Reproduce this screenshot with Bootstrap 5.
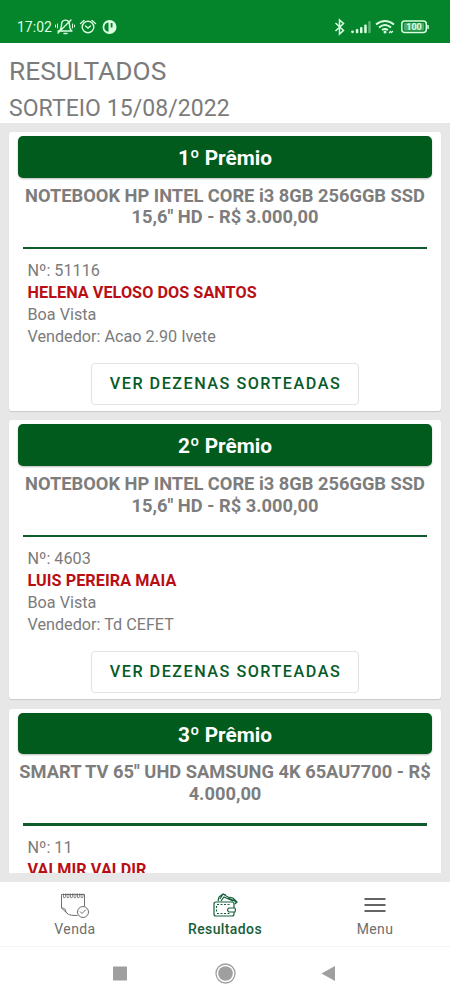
<!DOCTYPE html>
<html lang="pt-BR">
<head>
<meta charset="utf-8">
<meta name="viewport" content="width=device-width, initial-scale=1">
<title>Resultados</title>
<link href="https://cdn.jsdelivr.net/npm/bootstrap@5.3.0/dist/css/bootstrap.min.css" rel="stylesheet">
<style>
body{font-family:Roboto,"Liberation Sans",sans-serif;color:#7b7b7b;height:1000px;overflow:hidden;background:#fff}
.status{height:42.5px;background:#04842b;color:#d9ffe0;padding:11px 20px 0 17px;flex:none}
.clock{font-size:14px;line-height:32px}
.heading{height:80.5px;padding-left:9px;flex:none}
.heading h1{font-size:26.3px;line-height:30px;padding-top:13px;margin:0;font-weight:400}
.heading h2{font-size:23px;line-height:26px;padding-top:10px;margin:0;font-weight:400;letter-spacing:.05px}
.results{height:758.5px;padding:9px 7px 0;background:#e7e7e8;flex:none}
.clipper{height:741px;overflow:hidden;padding:0 2px}
.prize{height:279px;margin-bottom:9.4px;border:0;border-radius:3px;padding:4px 9px 0;box-shadow:0 1px 1px #0002}
.banner{height:41.5px;border-radius:5px;background:#015b1d;box-shadow:0 1px 2px #0004;font-size:20.8px;line-height:44px;font-weight:700}
.item-name{font-size:18.3px;line-height:21.7px;font-weight:700;height:69px;padding-top:7px;margin:0 -6px;color:#7d7d7d}
.rule{height:2.6px;background:#105b2b;margin:0 5px;flex:none}
.details{font-size:16.2px;line-height:22.1px;padding:10.7px 0 0 9.5px;height:114px}
.winner{color:#b90e14;font-weight:700;letter-spacing:.06px}
.btn-draw{width:268.5px;height:41.5px;border:1.4px solid #e2e2e2;border-radius:4px;color:#075b29;font-size:16.2px;font-weight:500;letter-spacing:1.5px;padding:0 0 0 1px;line-height:40.5px}
.tabs{height:65.5px;border-bottom:1.5px solid #f3f3f3;flex:none}
.tab-item{width:150px;font-size:14px;letter-spacing:.4px;line-height:18px;color:#6e6e6e;padding-top:8px;text-decoration:none}
.tab-item.active{color:#17603a;font-weight:500}
.tab-item svg{height:30px;width:36px}
.system{height:53px;flex:none}
</style>
</head>
<body class="d-flex flex-column">
<header class="status d-flex justify-content-between">
  <div class="d-flex">
    <span class="clock">17:02</span>
    <svg width="70" height="32" fill="none" stroke="currentColor" stroke-width="1.4" stroke-linecap="round">
      <path d="M6 20h14M8 19c2-2 1-5 2-8 1-2 5-3 7 0 1 3 0 6 2 8M12 22.500h3M6 22 19 9"/><path stroke-width="1" d="M5.500 13v4M3.500 14v2M20.500 13v4M22.500 14v2"/>
      <circle cx="36" cy="16" r="5.800"/><path d="m33.500 15 2.500 2 2.500-2M28.500 12.500l3.500-3M43.500 12.500l-3.500-3"/>
      <circle cx="57.500" cy="16" r="7" fill="currentColor" stroke="none"/><path d="M56.500 11.500v9.300c-3.500-.8-4.500-3.300-4-5.800.5-2 2-3.500 4-3.500M58.700 12h1.800v4.500h-1.800z" fill="#04842b" stroke="none"/>
    </svg>
  </div>
  <svg width="98" height="32" fill="none" stroke="currentColor" stroke-width="1.500">
    <path d="m3.500 12 8 7.500L7.500 23V9l4 3.500-8 7.500" />
    <g fill="currentColor" stroke="none"><circle cx="20.500" cy="20.800" r="1.400"/><rect x="23.800" y="18" width="2.500" height="4.200" rx="1"/><rect x="28" y="16" width="2.500" height="6.200" rx="1"/><rect x="32.200" y="13.500" width="2.500" height="8.700" rx="1"/><rect x="36.200" y="10" width="2.500" height="12.200" rx="1" opacity=".4"/></g>
    <path d="M44 13.500q9-7 18 0M47 16.500q6-5 12 0M50 19q3-2 6 0" stroke-width="2"/><circle cx="53" cy="21" r="1.500" fill="currentColor" stroke="none"/><path d="M57 22l2-2M59 22l2-2" stroke-width="1.200"/>
    <rect x="69.800" y="10" width="24.500" height="11.500" rx="3"/><rect x="72" y="12" width="20" height="7.500" rx="1" fill="#fff" fill-opacity=".3" stroke="none"/><path d="M96 14v4"/>
    <text x="82" y="19.300" text-anchor="middle" fill="currentColor" stroke="none" font-family="Roboto" font-weight="700" font-size="9">100</text>
  </svg>
</header>
<div class="heading"><h1>RESULTADOS</h1><h2>SORTEIO 15/08/2022</h2></div>
<main class="results w-100">
 <div class="clipper">
  <article class="card prize">
    <div class="banner text-white text-center">1º Prêmio</div>
    <div class="item-name text-center">NOTEBOOK HP INTEL CORE i3 8GB 256GGB SSD<br>15,6" HD - R$ 3.000,00</div>
    <div class="rule"></div>
    <div class="details"><div>Nº: 51116</div><div class="winner">HELENA VELOSO DOS SANTOS</div><div>Boa Vista</div><div>Vendedor: Acao 2.90 Ivete</div></div>
    <button class="btn btn-draw mx-auto">VER DEZENAS SORTEADAS</button>
  </article>
  <article class="card prize">
    <div class="banner text-white text-center">2º Prêmio</div>
    <div class="item-name text-center">NOTEBOOK HP INTEL CORE i3 8GB 256GGB SSD<br>15,6" HD - R$ 3.000,00</div>
    <div class="rule"></div>
    <div class="details"><div>Nº: 4603</div><div class="winner">LUIS PEREIRA MAIA</div><div>Boa Vista</div><div>Vendedor: Td CEFET</div></div>
    <button class="btn btn-draw mx-auto">VER DEZENAS SORTEADAS</button>
  </article>
  <article class="card prize">
    <div class="banner text-white text-center">3º Prêmio</div>
    <div class="item-name text-center">SMART TV 65" UHD SAMSUNG 4K 65AU7700 - R$<br>4.000,00</div>
    <div class="rule"></div>
    <div class="details"><div>Nº: 11</div><div class="winner">VALMIR VALDIR</div></div>
  </article>
 </div>
</main>
<nav class="tabs d-flex">
  <a class="tab-item d-flex flex-column align-items-center" href="#"><svg viewBox="0 0 36 30" fill="none" stroke="currentColor" stroke-width="1"><path d="M27.500 16V4.500H4.500V18c3 0 4 1 4 3 2 4 5 4.500 12 4.500M4.500 18l6.500 6"/><path d="M6.500 3.500v4q2 1 2-1v-3M10 3.500v4q2 1 2-1v-3M13.500 3.500v4q2 1 2-1v-3M17 3.500v4q2 1 2-1v-3M20.500 3.500v4q2 1 2-1v-3M24 3.500v4q2 1 2-1v-3" stroke-width=".8"/><circle cx="26" cy="22" r="5.500"/><path d="m23 21.500 2 2 4-4"/></svg><span>Venda</span></a>
  <a class="tab-item active d-flex flex-column align-items-center" href="#"><svg viewBox="0 0 36 30" fill="none" stroke="currentColor" stroke-width="1.200"><path d="M27 18v-4q0-2-2-2H9q-2 0-2 2v10q0 2 2 2h16q2 0 2-2v-2M28 18h-6q-3 2 0 4h6q1-2 0-4M11 11l1-4 4-3 5 3 5 1 4 4-2 2M14 11l3-4 9 4M19 5l-3-1-3 5M21 8l5 2 3 2"/><path d="M10 14.500h13M10 23.500h13M9.500 16v7" stroke-dasharray="2 1.500"/></svg><span>Resultados</span></a>
  <a class="tab-item d-flex flex-column align-items-center" href="#"><svg viewBox="0 0 36 30" fill="none" stroke="#646464" stroke-width="2"><path d="M7.500 9h21M7.500 15h21M7.500 21h21"/></svg><span>Menu</span></a>
</nav>
<footer class="system"><svg width="450" height="53" fill="#9f9f9f"><rect x="113" y="19.500" width="14" height="14" rx=".5"/><circle cx="225.500" cy="26.500" r="7.300"/><circle cx="225.500" cy="26.500" r="9.500" fill="none" stroke="#9f9f9f" stroke-width="1.300"/><path d="M321.500 26.500 335 19v15z"/></svg></footer>
<script src="https://cdn.jsdelivr.net/npm/bootstrap@5.3.0/dist/js/bootstrap.bundle.min.js"></script>
</body>
</html>
